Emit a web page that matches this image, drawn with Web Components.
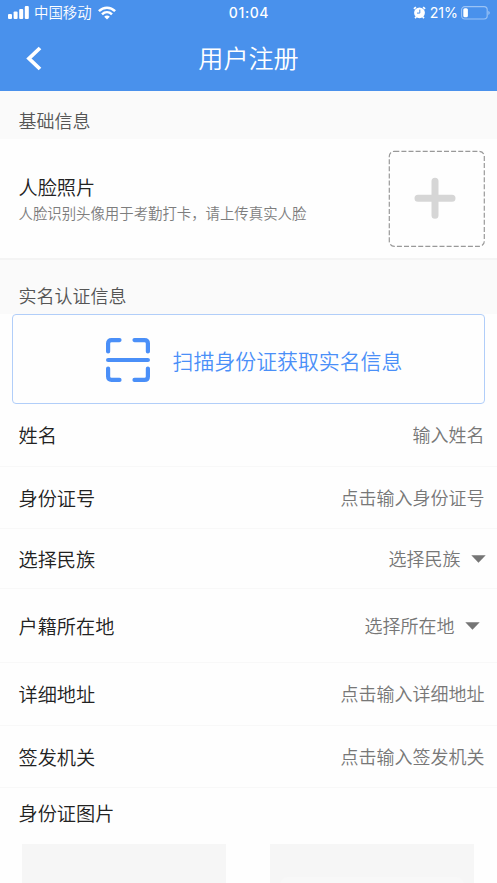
<!DOCTYPE html>
<html lang="zh-CN">
<head>
<meta charset="utf-8">
<meta name="viewport" content="width=device-width">
<title>用户注册</title>
<style>
html, body { margin: 0; height: 100%; overflow: hidden; background: #fefefe; }
body { font-family: "Noto Sans CJK SC DemiLight", "Noto Sans CJK SC", sans-serif; font-weight: 350; }
</style>
</head>
<body>
<register-page></register-page>
<script>
const define = (name, html) => {
  const template = document.createElement('template');
  template.innerHTML = html;
  customElements.define(name, class extends HTMLElement {
    constructor() {
      super();
      this.attachShadow({ mode: 'open' }).append(template.content.cloneNode(true));
    }
  });
};

define('status-bar', `
<style>
:host { display: grid; grid-template-columns: 1fr auto 1fr; align-items: center; height: 25px; padding: 0 7px 0 8px; color: #fff; font-size: 14.4px; line-height: 25px; box-sizing: border-box; }
.side { display: flex; align-items: center; }
.right { justify-content: flex-end; }
svg { display: block; flex: none; }
.num { font-family: Inter, sans-serif; }
.time { font-size: 14px; font-weight: 500; letter-spacing: .6px; }
.pct { font-size: 14.2px; font-weight: 400; margin: 0 3px 0 4px; }
.carrier { margin: 0 6px 0 5px; padding-bottom: 1px; line-height: 24px; }
</style>
<div class="side">
<svg width="21" height="13" viewBox="0 0 21 13" fill="#fff"><rect y="8" width="4" height="5" rx="1.1"/><rect x="5.6" y="5.5" width="4" height="7.5" rx="1.1"/><rect x="11.2" y="3" width="4" height="10" rx="1.1"/><rect x="16.8" width="4" height="13" rx="1.1"/></svg>
<span class="carrier">中国移动</span>
<svg width="18" height="14" viewBox="0 0 18 14" fill="none" stroke="#fff" stroke-width="2.5"><path d="M.9 5.2C5.6.6 12.4.6 17.1 5.2M4 8.4c2.9-2.8 7.1-2.8 10 0"/><path d="M9 13.5 6.2 10.7c1.6-1.5 4-1.5 5.6 0Z" fill="#fff" stroke="none"/></svg>
</div>
<span class="num time">01:04</span>
<div class="side right">
<svg width="13" height="13" viewBox="0 0 13 13"><circle cx="6.5" cy="6.8" r="5.4" fill="#fff"/><path d="M.9 2.9 2.9 1.1M12.1 2.9 10.1 1.1M2 12.2l1.3-1.3M11 12.2l-1.3-1.3" stroke="#fff" stroke-width="1.7"/><path d="M6.8 3.6v3.5H4" fill="none" stroke="#4991ec" stroke-width="1"/></svg>
<span class="num pct">21%</span>
<svg width="29" height="14" viewBox="0 0 29 14"><rect x=".6" y=".6" width="25.6" height="12.4" rx="3.2" fill="none" stroke="#9bc3f5" stroke-width="1.1"/><rect x="2.3" y="2.3" width="4.6" height="9" rx="1.5" fill="#fff"/><path d="M27.3 4.7v4.3q1.5-.7 1.5-2.15T27.3 4.7Z" fill="#9bc3f5"/></svg>
</div>`);

define('app-header', `
<style>
:host { display: block; height: 91px; background: #4991ec; color: #fff; box-sizing: border-box; }
.nav { display: grid; grid-template-columns: 60px 1fr 60px; align-items: center; height: 66px; }
svg { display: block; margin-left: 26px; }
h1 { margin: 0; text-align: center; font-size: 25.1px; font-weight: inherit; line-height: 64px; padding-bottom: 2px; }
</style>
<status-bar></status-bar>
<div class="nav">
<svg width="17" height="25" viewBox="0 0 17 25"><path d="M14 2 3 12.5 14 23" fill="none" stroke="#fff" stroke-width="3.8"/></svg>
<h1><slot></slot></h1>
</div>`);

define('section-title', `
<style>
:host { display: flex; align-items: flex-end; background: #fafafa; color: #555; font-size: 18px; line-height: 36px; height: var(--section-height, 48px); padding: 0 18.5px 1px; box-sizing: border-box; border-top: var(--section-line, 0) solid #f4f4f4; }
</style><slot></slot>`);

define('face-upload', `
<style>
:host { display: flex; align-items: center; justify-content: space-between; height: 119px; padding: 0 12px 0 18.5px; box-sizing: border-box; }
.title { font-size: 19.2px; line-height: 28px; color: #222; }
.hint { font-size: 14.4px; line-height: 24px; color: #7d7d7d; }
svg { display: block; }
</style>
<div><div class="title"><slot name="title"></slot></div><div class="hint"><slot></slot></div></div>
<svg width="97" height="97" viewBox="0 0 97 97" fill="none"><rect x="1.3" y="1.3" width="95" height="95" rx="5" stroke="#999" stroke-width="1.2" stroke-dasharray="5 2.1"/><path d="M47 31.2v34M30 48.3h34" stroke="#d6d6d6" stroke-width="7" stroke-linecap="round"/></svg>`);

define('scan-button', `
<style>
:host { display: flex; align-items: center; justify-content: center; gap: 23px; height: 90px; margin: 0 12px; box-sizing: border-box; border: 1.2px solid #b1cef9; border-radius: 4px; background: #fefefe; color: #4a8ff8; font-size: 20.9px; line-height: 32px; padding: 2px 0 0 11px; }
svg { display: block; }
</style>
<svg width="44" height="44" viewBox="0 0 44 44" fill="none" stroke="#4a8ff8" stroke-width="4.2" stroke-linecap="round" stroke-linejoin="round"><path d="M2.1 13.5V5.5Q2.1 2.1 5.5 2.1h8M28.5 2.1h10q3.4 0 3.4 3.4v8M41.9 30.5v8q0 3.4-3.4 3.4h-10M13.5 41.9h-8q-3.4 0-3.4-3.4v-8M2.1 22h39.8"/></svg>
<span><slot></slot></span>`);

define('form-row', `
<style>
:host { display: flex; align-items: center; justify-content: space-between; height: var(--row-height, 62px); padding: 0 12.5px 0 18.5px; box-sizing: border-box; border-bottom: 1px solid #f8f8f8; line-height: 30px; }
.label { font-size: 19.2px; color: #222; }
.value { display: flex; align-items: center; font-size: 18px; line-height: 28px; padding-bottom: 2px; color: #777; }
</style>
<span class="label"><slot name="label"></slot></span><span class="value"><slot></slot></span>`);

define('drop-arrow', `
<style>:host { display: block; margin-left: 10px; padding-top: 3px; margin-right: var(--arrow-inset, -1px); } svg { display: block; }</style>
<svg width="15" height="8" viewBox="0 0 15 8"><path d="M.3.3h14.4L7.5 7.8Z" fill="#757575"/></svg>`);

define('id-photos', `
<style>
:host { display: block; }
.title { padding-left: 18.5px; height: 56px; line-height: 51px; font-size: 19.2px; color: #222; box-sizing: border-box; }
.cards { display: flex; justify-content: space-between; padding: 0 23px 0 22px; }
.card { width: 204px; height: 60px; background: #f6f6f6; box-sizing: border-box; padding: 33px 10px 0; }
.inner { height: 27px; border-radius: 8px; background: #f8f8f8; }
</style>
<div class="title"><slot></slot></div>
<div class="cards"><div class="card"></div><div class="card"><div class="inner"></div></div></div>`);

define('register-page', `
<style>
:host { display: block; height: 883px; overflow: hidden; }
.real { --section-height: 56px; --section-line: 2px; }
</style>
<app-header>用户注册</app-header>
<section-title>基础信息</section-title>
<face-upload><span slot="title">人脸照片</span>人脸识别头像用于考勤打卡，请上传真实人脸</face-upload>
<section-title class="real">实名认证信息</section-title>
<scan-button>扫描身份证获取实名信息</scan-button>
<form-row style="--row-height:63px"><span slot="label">姓名</span>输入姓名</form-row>
<form-row><span slot="label">身份证号</span>点击输入身份证号</form-row>
<form-row style="--row-height:60px"><span slot="label">选择民族</span>选择民族<drop-arrow></drop-arrow></form-row>
<form-row style="--row-height:74px;--arrow-inset:5px"><span slot="label">户籍所在地</span>选择所在地<drop-arrow></drop-arrow></form-row>
<form-row style="--row-height:63px"><span slot="label">详细地址</span>点击输入详细地址</form-row>
<form-row><span slot="label">签发机关</span>点击输入签发机关</form-row>
<id-photos>身份证图片</id-photos>`);
</script>
</body>
</html>
